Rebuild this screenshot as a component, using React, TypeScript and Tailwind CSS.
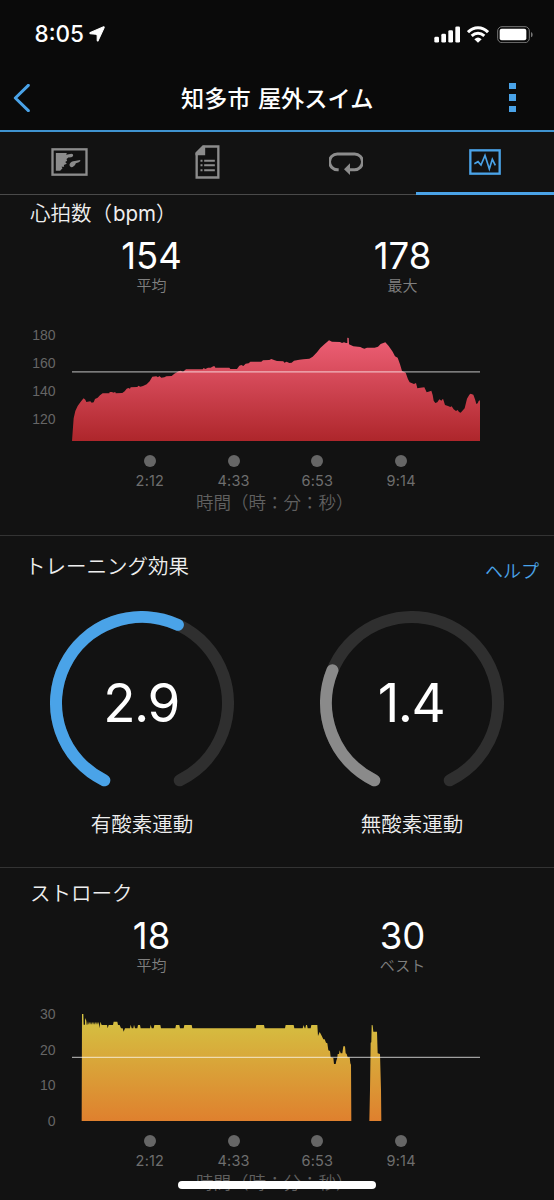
import type { ReactNode } from 'react'

type Stat = { value: string; label: string }

const ticks = ['2:12', '4:33', '6:53', '9:14']

const heartRatePath =
  'M0 378 L2 350 L5 310 L10 288 L17 273 L25 262 L31 254 L35 250 L40 254 L43 261 L55 259 L59 263 L65 262 L69 252 L77 248 L84 241 L92 235 L112 235 L113 231 L121 231 L123 233 L130 231 L131 235 L151 234 L158 229 L164 221 L169 219 L174 221 L176 217 L196 216 L199 212 L205 215 L213 213 L224 208 L233 199 L241 185 L253 184 L258 187 L262 183 L268 188 L277 187 L283 184 L299 183 L307 176 L320 169 L326 167 L333 170 L342 163 L392 163 L395 159 L400 162 L408 158 L416 158 L424 154 L428 154 L430 158 L472 158 L475 162 L495 162 L502 152 L508 150 L514 153 L521 146 L530 145 L535 140 L568 140 L573 136 L592 135 L598 132 L608 136 L615 138 L634 139 L637 143 L644 140 L652 144 L659 143 L666 137 L682 134 L694 133 L712 131 L722 125 L735 112 L745 99 L758 87 L766 80 L771 76 L780 80 L804 81 L810 84 L816 82 L822 84 L826 84 L826 68 L830 69 L831 88 L844 94 L865 96 L871 99 L877 101 L885 98 L908 98 L918 95 L926 87 L940 82 L950 93 L962 110 L969 124 L977 128 L984 148 L990 168 L1001 173 L1008 193 L1013 202 L1026 207 L1032 204 L1036 220 L1045 218 L1057 217 L1064 232 L1074 229 L1078 227 L1082 240 L1085 257 L1090 264 L1096 262 L1102 253 L1108 257 L1113 251 L1119 270 L1128 273 L1135 276 L1139 274 L1145 283 L1152 288 L1157 285 L1161 291 L1166 293 L1178 280 L1185 251 L1192 239 L1196 236 L1204 239 L1209 253 L1213 267 L1217 265 L1220 258 L1224 256 L1224 378 Z'

const strokePath =
  'M29 393 L30 72 L34 72 L35 104 L39 104 L39 84 L43 92 L44 104 L46 104 L48 94 L50 104 L52 95 L54 104 L57 95 L59 104 L61 95 L63 104 L66 95 L68 104 L70 95 L72 104 L75 95 L78 104 L80 95 L83 115 L85 95 L89 105 L105 105 L107 115 L110 105 L123 105 L125 95 L136 95 L138 105 L143 105 L147 115 L152 115 L155 125 L159 115 L174 115 L176 104 L179 115 L184 115 L186 104 L189 115 L196 115 L198 105 L204 105 L206 115 L234 115 L236 104 L239 115 L245 115 L247 105 L265 105 L267 115 L310 115 L312 105 L322 105 L324 115 L335 115 L337 105 L359 105 L361 115 L551 115 L553 105 L576 105 L578 115 L639 115 L641 105 L665 105 L667 115 L692 115 L695 105 L698 115 L700 115 L702 105 L705 105 L707 115 L716 115 L718 105 L736 105 L738 138 L743 126 L749 137 L754 148 L758 148 L762 158 L766 160 L769 181 L774 183 L776 202 L784 204 L786 222 L791 222 L793 212 L796 203 L797 192 L801 192 L803 181 L806 190 L811 190 L814 169 L819 169 L821 190 L824 192 L827 202 L833 202 L835 220 L837 224 L838 393 Z M892 393 L894 300 L896 158 L898 157 L899 105 L902 106 L904 125 L915 125 L917 190 L924 192 L927 300 L928 393 Z'

function StatusBar() {
  return (
    <div className="flex h-[68px] items-center pl-[34.5px] pr-[21px]">
      <span className="text-[22.5px] font-medium leading-none">8:05</span>
      <svg
        className="ml-[5px] h-[16px] w-[16px]"
        viewBox="-1 -1 47 47"
        fill="white"
        stroke="white"
        strokeWidth="3"
        strokeLinejoin="round"
      >
        <path d="M42 1Q45 1 43 5L26 42Q24 45 23 41L23 28Q23 23 19 23L3 22Q0 20 3 18Z" />
      </svg>
      <div className="ml-auto flex items-center">
        <svg className="mr-[7px] h-[17px] w-[26px]" viewBox="0 0 78 50" fill="white">
          <rect x="1" y="32" width="14" height="17" rx="4" />
          <rect x="22" y="23" width="14" height="26" rx="4" />
          <rect x="43" y="12" width="14" height="37" rx="4" />
          <rect x="64" y="1" width="14" height="48" rx="4" />
        </svg>
        <svg className="mr-[8px] h-[17px] w-[22px]" viewBox="0 0 66 50" fill="none" stroke="white" strokeWidth="9">
          <path d="M3 18Q16 5 33 5T63 18" />
          <path d="M14 29Q23 21 33 21T52 29" />
          <path d="M22 39Q33 29 44 39L33 50Z" fill="white" stroke="none" />
        </svg>
        <svg className="h-[17px] w-[36px]" viewBox="0 0 108 51">
          <rect x="2" y="2" width="95" height="48" rx="13" fill="none" stroke="#777" strokeWidth="3" />
          <rect x="8" y="8" width="80" height="35" rx="6" fill="white" />
          <path d="M102 18Q107 20 107 26T102 34Z" fill="#777" />
        </svg>
      </div>
    </div>
  )
}

function Header() {
  return (
    <header className="flex h-[64px] items-center justify-between border-b-2 border-[#3f93d0] pb-[3px] pl-[13px] pr-[38px]">
      <svg className="h-[28px] w-[17px]" viewBox="0 0 51 84" fill="none" stroke="#4aa3e8" strokeWidth="9">
        <path d="M46 4L7 42L46 80" strokeLinecap="round" strokeLinejoin="round" />
      </svg>
      <h1 className="pl-[15px] font-['Noto_Sans_CJK_JP',sans-serif] text-[23.2px] font-medium leading-none [word-spacing:2px]">
        知多市 屋外スイム
      </h1>
      <div className="flex flex-col gap-[5px]">
        <i className="h-[6.5px] w-[6.5px] bg-[#4aa3e8]" />
        <i className="h-[6.5px] w-[6.5px] bg-[#4aa3e8]" />
        <i className="h-[6.5px] w-[6.5px] bg-[#4aa3e8]" />
      </div>
    </header>
  )
}

function Tab({ active, children }: { active?: boolean; children: ReactNode }) {
  return (
    <button
      className={`flex items-center justify-center ${
        active ? 'border-b-[3px] border-[#4aa3e8] text-[#4aa3e8]' : 'border-b border-[#4a4a4a] pb-0.5 text-[#8c8c8c]'
      }`}
    >
      {children}
    </button>
  )
}

function Tabs() {
  return (
    <nav className="grid h-[63px] grid-cols-4">
      <Tab>
        <svg className="h-[28px] w-[37px]" viewBox="0 0 110 84" fill="none">
          <rect x="4" y="4" width="102" height="76" stroke="currentColor" strokeWidth="7" />
          <path
            d="M14 15H47L45 20L57 18Q67 16 66 23Q64 29 53 28L46 33L48 38L42 42L47 47L38 51L39 56L31 56L34 61L27 68H14Z"
            fill="currentColor"
          />
          <path d="M55 49Q60 39 71 39L87 36Q90 39 83 43L74 46Q70 57 60 58Q54 57 55 49Z" fill="currentColor" />
        </svg>
      </Tab>
      <Tab>
        <svg className="h-[34px] w-[25px]" viewBox="0 0 74 102" fill="none">
          <path d="M24 4.500H69.500V97.500H4.500V24Z" stroke="currentColor" strokeWidth="7" />
          <path d="M24 2H30V31H1V24Z" fill="currentColor" />
          <path d="M16 47H22M27 47H59M16 61H22M27 61H59M16 76H22M27 76H59" stroke="currentColor" strokeWidth="6" />
        </svg>
      </Tab>
      <Tab>
        <svg className="mt-[3px] h-[23px] w-[34px]" viewBox="0 0 102 69" fill="none">
          <path d="M29 53H25A20 20 0 0 1 25 6H77A20 20 0 0 1 77 53H59" stroke="currentColor" strokeWidth="9" />
          <path d="M63 34V69L45 52Z" fill="currentColor" />
        </svg>
      </Tab>
      <Tab active>
        <svg className="h-[26px] w-[32px]" viewBox="0 0 96 78" fill="none" stroke="currentColor">
          <rect x="4" y="4" width="88" height="70" strokeWidth="7" />
          <path d="M16 44L27 38L36 48L48 19L61 60L70 31L79 49" strokeWidth="5" />
        </svg>
      </Tab>
    </nav>
  )
}

function ChartSection({
  id,
  title,
  stats,
  yLabels,
  yClass,
  viewBox,
  path,
  averageY,
  gradient,
  gradientTop,
  gradientBottom,
}: {
  id: string
  title: ReactNode
  stats: Stat[]
  yLabels: string[]
  yClass: string
  viewBox: string
  path: string
  averageY: number
  gradient: [string, string]
  gradientTop: number
  gradientBottom: number
}) {
  return (
    <section className="h-[348px] border-b border-[#333] pt-[9px]">
      <h2 className="h-[32px] pl-[30px] font-['Noto_Sans_CJK_JP',sans-serif] text-[20.5px] font-[350] leading-[30px] text-[#eee]">
        {title}
      </h2>

      <div className="grid h-[81px] grid-cols-2 px-[26px] text-center">
        {stats.map((stat) => (
          <div key={stat.label} className="flex flex-col pt-[9px]">
            <span className="text-[36.5px] leading-[37px]">{stat.value}</span>
            <span className="pt-[2px] text-[15px] font-[350] leading-[18px] text-[#808080]">{stat.label}</span>
          </div>
        ))}
      </div>

      <div className="flex h-[131px]">
        <div
          className={`flex w-[55.5px] flex-col justify-between text-right font-['Liberation_Sans',sans-serif] text-[14px] leading-[14px] text-[#666] ${yClass}`}
        >
          {yLabels.map((label) => (
            <span key={label}>{label}</span>
          ))}
        </div>
        <svg className="ml-[16px] h-[131px] w-[408px]" viewBox={viewBox}>
          <defs>
            <linearGradient id={id} gradientUnits="userSpaceOnUse" x1="0" y1={gradientTop} x2="0" y2={gradientBottom}>
              <stop offset="0" stopColor={gradient[0]} />
              <stop offset="1" stopColor={gradient[1]} />
            </linearGradient>
          </defs>
          <path d={path} fill={`url(#${id})`} />
          <path d={`M0 ${averageY}H1224`} stroke="white" strokeOpacity="0.6" strokeWidth="3.500" />
        </svg>
      </div>

      <div className="ml-[108px] mt-[14px] grid w-[335px] grid-cols-4 text-center text-[14.5px] leading-[18px] tracking-[0.2px] text-[#6e6e6e]">
        {ticks.map((tick) => (
          <div key={tick} className="flex flex-col items-center gap-[5px]">
            <i className="h-3 w-3 rounded-full bg-[#666]" />
            <span>{tick}</span>
          </div>
        ))}
      </div>
      <p className="mt-px pl-[196px] font-['Noto_Sans_CJK_JP',sans-serif] text-[17.5px] font-[350] leading-[22px] text-[#606060]">
        時間（時：分：秒）
      </p>
    </section>
  )
}

function Gauge({ value, label, color }: { value: number; label: string; color: string }) {
  // the dial covers 308 of 360 degrees, for a scale of 0 to 5
  const sweep = (value / 5) * 308

  return (
    <div className="flex w-[270px] flex-col items-center">
      <div className="grid h-[184px] w-[184px] place-items-center">
        <svg
          className="col-start-1 row-start-1 h-full w-full"
          viewBox="-92 -92 184 184"
          fill="none"
          strokeWidth="12"
          strokeLinecap="round"
        >
          <g transform="rotate(116)">
            <circle r="86" stroke="#2f2f2f" pathLength="360" strokeDasharray="308 360" />
            <circle r="86" stroke={color} pathLength="360" strokeDasharray={`${sweep} 360`} />
          </g>
        </svg>
        <span className="col-start-1 row-start-1 pr-[2px] text-[53px] leading-none tracking-[-1.5px]">
          {value.toFixed(1)}
        </span>
      </div>
      <span className="mt-[15px] text-[20.5px] font-[350] leading-[30px] text-[#eee]">{label}</span>
    </div>
  )
}

function TrainingEffect() {
  return (
    <section className="h-[332px] border-b border-[#333]">
      <div className="flex h-[75px] justify-between pl-[25px] pr-[15px]">
        <h2 className="pt-[16px] text-[20.5px] font-[350] leading-[30px] text-[#eee]">トレーニング効果</h2>
        <a className="pt-[21px] text-[18px] font-[350] leading-[30px] text-[#4aa3e8]">ヘルプ</a>
      </div>
      <div className="flex pl-[7px]">
        <Gauge value={2.9} label="有酸素運動" color="#4aa3e8" />
        <Gauge value={1.4} label="無酸素運動" color="#8a8a8a" />
      </div>
    </section>
  )
}

export default function App() {
  return (
    <div
      lang="ja"
      className="relative h-[1200px] w-[554px] overflow-hidden bg-[#121212] font-[Inter,'Noto_Sans_CJK_JP',sans-serif] text-white"
    >
      <div className="bg-[#0a0a0a]">
        <StatusBar />
        <Header />
      </div>
      <Tabs />

      <main className="-mt-[7px]">
        <ChartSection
          id="heart-rate"
          title={
            <>
              心拍数（<span className="ml-px font-[Inter,sans-serif] font-normal">bpm</span>）
            </>
          }
          stats={[
            { value: '154', label: '平均' },
            { value: '178', label: '最大' },
          ]}
          yLabels={['180', '160', '140', '120']}
          yClass="mt-[18px] h-[98px]"
          viewBox="0 -15 1224 393"
          path={heartRatePath}
          averageY={170.5}
          gradient={['#ee6076', '#ae262b']}
          gradientTop={68}
          gradientBottom={378}
        />
        <TrainingEffect />
        <ChartSection
          id="strokes"
          title="ストローク"
          stats={[
            { value: '18', label: '平均' },
            { value: '30', label: 'ベスト' },
          ]}
          yLabels={['30', '20', '10', '0']}
          yClass="mt-[17px] h-[121px]"
          viewBox="0 0 1224 393"
          path={strokePath}
          averageY={202}
          gradient={['#d4c442', '#df802e']}
          gradientTop={72}
          gradientBottom={393}
        />
      </main>

      {/* Home indicator */}
      <div className="absolute left-[178px] top-[1180.5px] h-2 w-[198px] rounded-full bg-white" />
    </div>
  )
}
